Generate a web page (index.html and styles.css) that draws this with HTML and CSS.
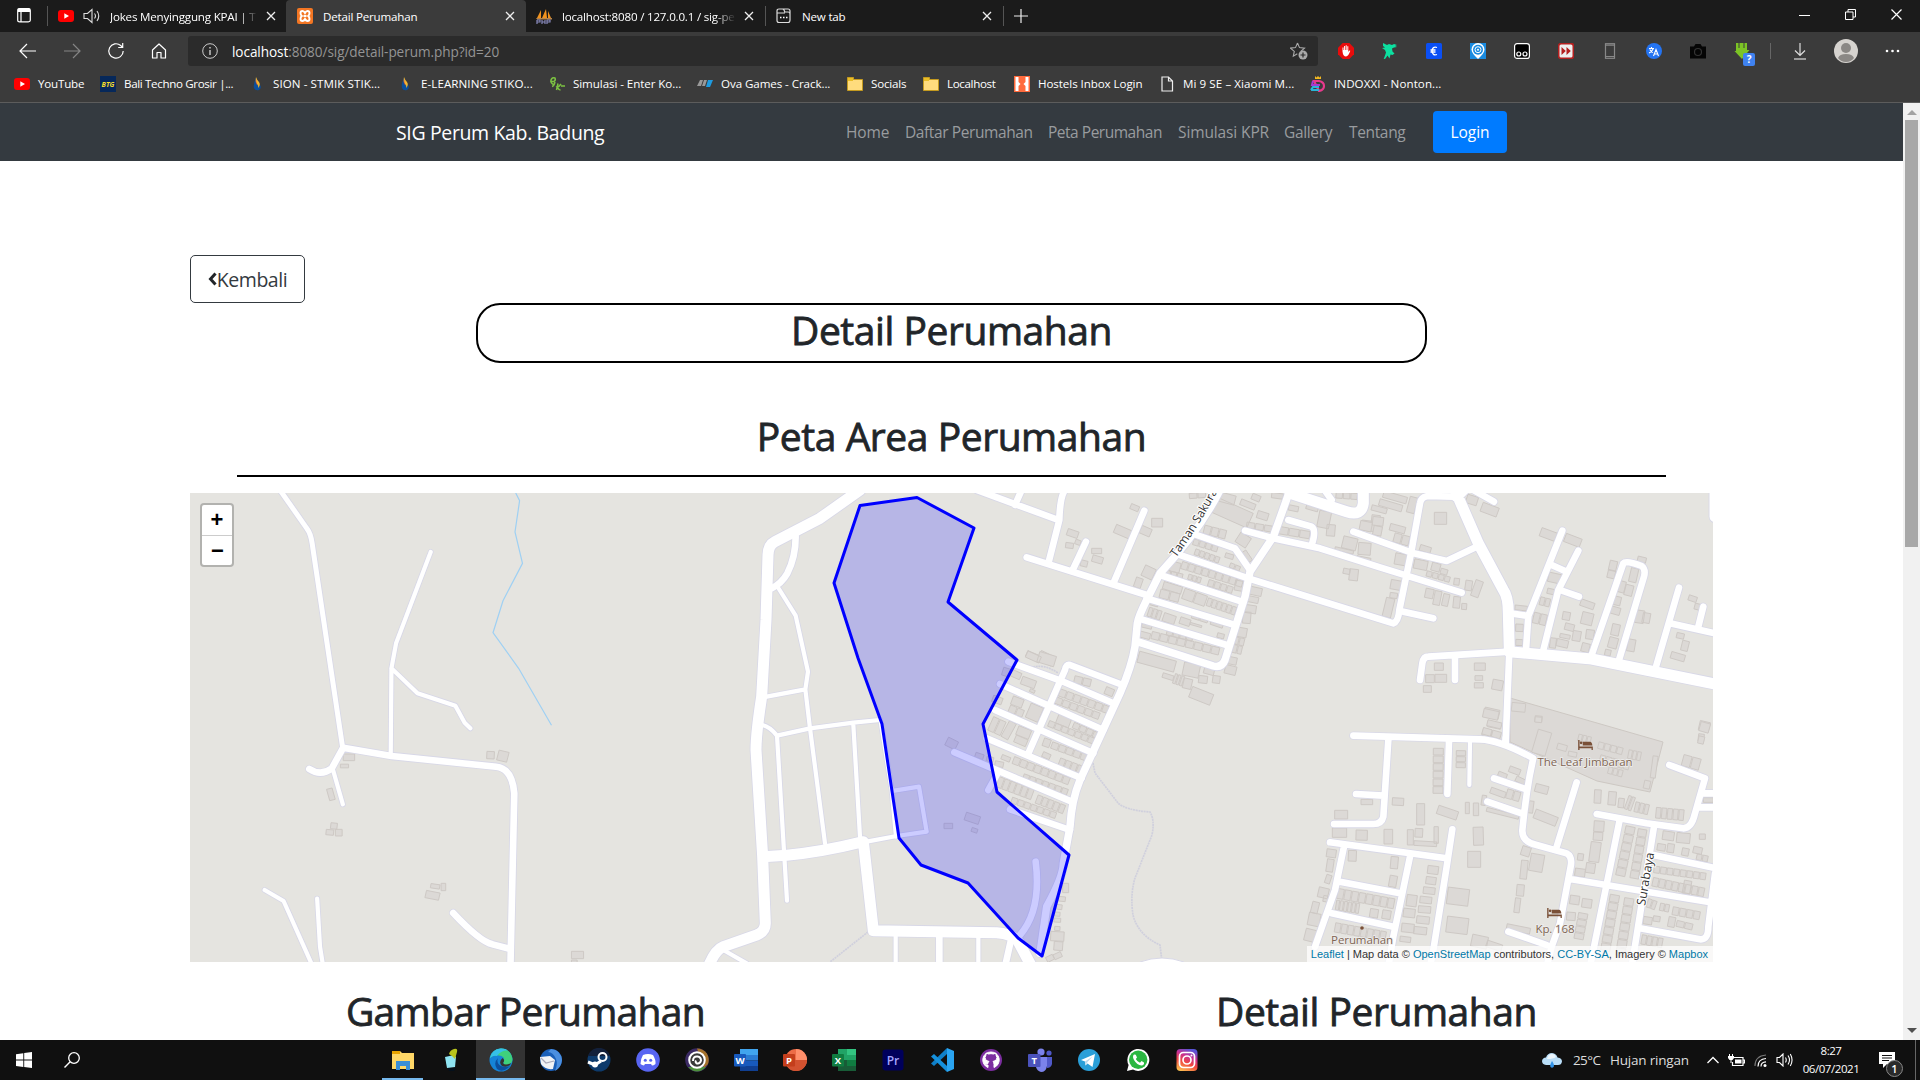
FILE: index.html
```html
<!DOCTYPE html>
<html lang="id">
<head>
<meta charset="utf-8">
<title>Detail Perumahan</title>
<link rel="stylesheet" href="styles.css">
</head>
<body>
<svg class="defs" aria-hidden="true">
  <symbol id="i-x" viewBox="0 0 10 10"><path d="M1 1l8 8M9 1l-8 8" stroke="currentColor" stroke-width="1.3" fill="none"/></symbol>
  <symbol id="i-yt" viewBox="0 0 16 16"><rect y="2" width="16" height="12" rx="3" fill="#f00"/><path d="M6.3 5.3v5.4L11 8z" fill="#fff"/></symbol>
  <symbol id="i-flame" viewBox="0 0 16 16"><path d="M7 2Q4 8 5 12q1 3 5 2 3-2 1-5Q9 6 7 2z" fill="#0b4f9c"/><path d="M7 1q-1 5 1 7 2 2 1 4 3-3 1-6Q8 4 7 1z" fill="#f2b632"/><path d="M7 3q0 4 1.500 6Q6 8 7 3z" fill="#e0402e"/></symbol>
  <symbol id="i-folder" viewBox="0 0 16 16"><path d="M.5 1.500h6v2h9v11H.5z" fill="#ffdc7d" stroke="#c49a1f"/><path d="M1 2h5v3H1z" fill="#e9bd28"/></symbol>
  <symbol id="i-bed" viewBox="0 0 16 12"><path d="M0 0h1.500v7H16v4h-1.400V9H1.500v2H0zM5 2h8q2 0 2.500 4H5z" fill="#7a5038"/><circle cx="3.200" cy="3" r="1.500" fill="#7a5038"/></symbol>
</svg>

<header class="browser">
  <div class="tabs">
    <div class="tabs-menu"><svg width="14" height="16" viewBox="0 0 14 16"><path d="M.7 2.500q0-2 2-2h8.600q2 0 2 2v9.800q0 1.500-2 1.500H2.700q-2 0-2-1.500zM.7 3.500h12.600M4 4v10" fill="none" stroke="#fff" stroke-width="1.200"/><path d="M1 1h12v2.500H1z" fill="#fff"/></svg></div>
    <div class="tab first">
      <svg width="16" height="16"><use href="#i-yt"/></svg>
      <svg class="spk" width="18" height="16" viewBox="0 0 18 16"><path d="M1 5.500h3.500L9 1.500v13l-4.500-4H1zM11.500 5.500q2 2.500 0 5M14 3q3.500 5 0 10" fill="none" stroke="#ddd" stroke-width="1.100"/></svg>
      <span class="title fade">Jokes Menyinggung KPAI | T</span>
      <svg class="x" width="10" height="10"><use href="#i-x"/></svg>
    </div>
    <div class="tab active">
      <svg width="16" height="16" viewBox="0 0 16 16"><rect width="16" height="16" rx="2" fill="#f37623"/><path d="M3.500 5q0-2 2-2Q7 3 8 5q1-2 2.500-2 2 0 2 2t-1.300 3q1.300 1 1.300 3t-2 2Q9 13 8 11q-1 2-2.500 2-2 0-2-2t1.300-3Q3.500 7 3.500 5zM6.500 8h3" fill="none" stroke="#fff" stroke-width="1.900"/></svg>
      <span class="title">Detail Perumahan</span>
      <svg class="x" width="10" height="10"><use href="#i-x"/></svg>
    </div>
    <div class="tab">
      <svg width="16" height="16" viewBox="0 0 16 16"><path d="M1 10L5 2v8zM6 10l4-9 1 9zM12 3l3 7h-3z" fill="#f0921e"/><path d="M0 10h16v1.500H1z" fill="#b8854a"/><path d="M1 12v4M1 12h3v2H1M6 12v4M6 14h3M9 12v4M11 12v4M11 12h3v2h-3" stroke="#8889bb" stroke-width="1.200" fill="none"/></svg>
      <span class="title fade">localhost:8080 / 127.0.0.1 / sig-pe</span>
      <svg class="x" width="10" height="10"><use href="#i-x"/></svg>
    </div>
    <div class="tab last">
      <svg width="15" height="16" viewBox="0 0 15 16"><path d="M1 3q0-2 2-2h3.500q1 0 1.500 1l.8 2H12q2 0 2 2v6q0 2.500-2 2.500H3Q1 14.500 1 12.500zM1 5h8M6 1h6q2 0 2 2v3" fill="none" stroke="#ddd" stroke-width="1.200"/><path d="M4 9.500h1.500M7 9.500h1.500M10 9.500h1.500" stroke="#fff" stroke-width="1.400"/></svg>
      <span class="title">New tab</span>
      <svg class="x" width="10" height="10"><use href="#i-x"/></svg>
    </div>
    <svg class="plus" width="14" height="14"><path d="M7 0v14M0 7h14" stroke="#eee" stroke-width="1.200"/></svg>
    <div class="winbtns">
      <svg width="11" height="11"><path d="M0 6.500h11" stroke="#fff"/></svg>
      <svg width="11" height="11"><path d="M.5 3h7.500v7.500H.5zM3 3V.5h7.500V8H8" fill="none" stroke="#fff"/></svg>
      <svg width="11" height="11"><path d="M.5.5l10 10M10.500.5l-10 10" stroke="#fff" stroke-width="1.200"/></svg>
    </div>
  </div>

  <div class="toolbar">
    <div class="navbtns">
      <svg width="18" height="16" viewBox="0 0 18 16"><path d="M8 1L1 8l7 7M1 8h16" fill="none" stroke="#fff" stroke-width="1.200"/></svg>
      <svg width="18" height="16" viewBox="0 0 18 16"><path d="M10 1l7 7-7 7M17 8H1" fill="none" stroke="#858585" stroke-width="1.200"/></svg>
      <svg width="18" height="18" viewBox="0 0 18 18"><path d="M16.200 9a7.200 7.200 0 1 1-2.500-5.500l2 2M15.700 1v4.500h-4.500" fill="none" stroke="#fff" stroke-width="1.200"/></svg>
      <svg width="16" height="16" viewBox="0 0 16 16"><path d="M1.500 7L8 1l6.500 6v8H10V9.500H6V15H1.500z" fill="none" stroke="#fff" stroke-width="1.200" stroke-linejoin="round"/></svg>
    </div>
    <div class="address">
      <svg width="16" height="16" viewBox="0 0 16 16"><circle cx="8" cy="8" r="7.300" fill="none" stroke="#ccc"/><path d="M8 7v5M8 4v1.500" stroke="#ddd" stroke-width="1.300"/></svg>
      <span class="url"><b>localhost</b>:8080/sig/detail-perum.php?id=20</span>
      <svg class="star" width="18" height="18" viewBox="0 0 18 18"><path d="M7.500 1l2 4.600 5 .5-3.700 3.200M7.500 1l-2 4.600-5 .5 3.800 3.300-1 4.800 4-2.400" fill="none" stroke="#aaa" stroke-width="1.100"/><circle cx="13" cy="13" r="4.500" fill="#aaa"/><path d="M13 10.500v5M10.500 13h5" stroke="#2b2b2b" stroke-width="1.200"/></svg>
    </div>
    <div class="exts">
      <svg viewBox="0 0 16 16"><path d="M4.700 0h6.600L16 4.700v6.600L11.300 16H4.700L0 11.300V4.700z" fill="#e80c0c"/><path d="M4.500 8.500V4.500h1V7h.6V3h1v4h.6V2.300h1V7h.6V3.300h1V9l1-1.500 1 .3Q10.500 13.500 8 13.500q-3 0-3.500-5z" fill="#fff"/></svg>
      <svg viewBox="0 0 16 16"><path d="M1 0l4 2 2-1 3 1 2-1 3 1-2 1 2 1-3 .5-2 1 .5 3 2 2-2 1.500-2-.5-1 4-2-3-2 3-2 1 1.500-4 1-3-1-2.500-3-2 3-.5-2-1.500z" fill="#0ce0a0"/></svg>
      <svg viewBox="0 0 16 16"><rect width="16" height="16" rx="1.500" fill="#0a4ff5"/><path d="M11 4.500q-4.500-1.500-5 3.500.5 5 5 3.500M4.500 7h5M4.500 9h5" fill="none" stroke="#fff" stroke-width="1.300"/></svg>
      <svg viewBox="0 0 16 16"><rect width="16" height="16" fill="#1a8be0"/><path d="M8 16Q1.500 10 1.500 6.500a6.500 6.500 0 0 1 13 0Q14.500 10 8 16z" fill="#fff"/><circle cx="8" cy="6.700" r="5" fill="#1a8be0"/><circle cx="8" cy="6.700" r="3" fill="none" stroke="#fff"/><circle cx="8" cy="6.700" r="1" fill="#fff"/></svg>
      <svg viewBox="0 0 16 16"><rect x=".6" y=".6" width="14.800" height="14.800" rx="2.500" fill="#000" stroke="#fff" stroke-width="1.200"/><g fill="none" stroke="#fff" stroke-width="1.200"><circle cx="4.800" cy="11" r="2"/><circle cx="11" cy="11" r="2"/></g></svg>
      <svg viewBox="0 0 16 16"><rect x=".6" y=".6" width="14.800" height="14.800" rx="2.500" fill="#eee" stroke="#b41f1f" stroke-width="1.800"/><path d="M3.500 4l4.300 4-4.300 4zM8.500 4l4.300 4-4.300 4z" fill="#b41f1f"/></svg>
      <svg viewBox="0 0 16 16"><rect x="3.500" y=".7" width="9" height="14.600" fill="none" stroke="#888" stroke-width="1.200"/><path d="M3.500 2.200h9M3.500 13.500h9" stroke="#888" stroke-width="1.200"/></svg>
      <svg viewBox="0 0 16 16"><circle cx="8" cy="8" r="8" fill="#2474f2"/><path d="M3 5.500h5M5.500 4v1.500M7.300 5.500Q6 9 3 10M3.800 6.500Q5 9 7 9.500M7.500 13L10 6.500 12.500 13M8.500 11h3" fill="none" stroke="#fff" stroke-width="1.100"/></svg>
      <svg viewBox="0 0 16 16"><path d="M0 3.500h4L5.500 1h5L12 3.500h4v12H0z" fill="#050505"/><circle cx="8" cy="9" r="3.500" fill="none" stroke="#333" stroke-width="1.200"/></svg>
      <span class="idm"><svg viewBox="0 0 16 16"><path d="M2 0h11v7h2.500L8 16 .5 8H2z" fill="#7cc425"/><path d="M5 0v5M10 0v5" stroke="#3b3b3b"/></svg><i>?</i></span>
    </div>
    <div class="tools">
      <svg width="14" height="17" viewBox="0 0 14 17"><path d="M7 0v12M2 7.500L7 12.500l5-5" fill="none" stroke="#ddd" stroke-width="1.200"/><path d="M1 16h12" stroke="#ddd" stroke-width="1.200"/></svg>
      <svg class="avatar" width="24" height="24" viewBox="0 0 24 24"><circle cx="12" cy="12" r="12" fill="#d6d3cf"/><circle cx="12" cy="9" r="5" fill="#8b8885"/><path d="M4 19q1.500-4 8-4t8 4q-3 4-8 4t-8-4z" fill="#8b8885"/></svg>
      <svg class="dots" width="15" height="4"><circle cx="2" cy="2" r="1.300" fill="#fff"/><circle cx="7.500" cy="2" r="1.300" fill="#fff"/><circle cx="13" cy="2" r="1.300" fill="#fff"/></svg>
    </div>
  </div>

  <div class="bookmarks">
    <span><svg><use href="#i-yt"/></svg>YouTube</span>
    <span class="tight"><svg viewBox="0 0 16 16"><rect width="16" height="16" fill="#06285a"/><text class="btg" x="8" y="11">BTG</text></svg>Bali Techno Grosir |...</span>
    <span class="wide"><svg><use href="#i-flame"/></svg>SION - STMIK STIK...</span>
    <span class="wide"><svg><use href="#i-flame"/></svg>E-LEARNING STIKO...</span>
    <span class="mid"><svg viewBox="0 0 16 16"><path d="M5.500 9Q1 7 2 4t4-2q1 2-1 3.500H2.500M6 6q-1 4-3 4.500M9 7.500L7.500 14M12 8q-2 3-4 3 2 3 3.500 3M12 10h4" fill="none" stroke="#7cc242" stroke-width="1.500"/></svg>Simulasi - Enter Ko...</span>
    <span class="mid"><svg viewBox="0 0 16 16"><path d="M3 4h3L4 10H0zM7 4h3l-2 6H5z" fill="#999"/><path d="M11 4h5l-3 7H9z" fill="#1e9be0"/></svg>Ova Games - Crack...</span>
    <span><svg><use href="#i-folder"/></svg>Socials</span>
    <span class="tight"><svg><use href="#i-folder"/></svg>Localhost</span>
    <span class="mid"><svg viewBox="0 0 16 16"><rect width="16" height="16" fill="#ff6b3d"/><path d="M1.500 1h3v5l2 2-2 2v5h-3zM14.500 1h-3v5l-2 2 2 2v5h3z" fill="#fff"/></svg>Hostels Inbox Login</span>
    <span class="wide"><svg viewBox="0 0 16 16"><path d="M3 1h6.500l4 4v10H3zM9.500 1v4h4" fill="none" stroke="#eee" stroke-width="1.200"/></svg>Mi 9 SE – Xiaomi M...</span>
    <span class="wider"><svg viewBox="0 0 16 16"><path d="M5 0l1.500 1.500L8 0l1.500 1.500L11 0v3H5z" fill="#f3b820"/><path d="M4 5h5q5 1 5 5t-5 5z" fill="none" stroke="#e83a8c" stroke-width="2.200"/><path d="M3 5l-1 4h8" fill="none" stroke="#a33bd0" stroke-width="2"/><path d="M1 14l2-3h6M1 14h8" fill="none" stroke="#28b5d8" stroke-width="2.200"/></svg>INDOXXI - Nonton...</span>
  </div>
</header>

<div class="viewport">
  <div class="page">
    <nav class="navbar">
      <span class="brand">SIG Perum Kab. Badung</span>
      <ul class="links"><li>Home</li><li>Daftar Perumahan</li><li>Peta Perumahan</li><li>Simulasi KPR</li><li>Gallery</li><li>Tentang</li></ul>
      <span class="login">Login</span>
    </nav>
    <main>
      <a class="back"><svg width="9" height="14" viewBox="0 0 9 14"><path d="M7.500 1.500L2.500 7l5 5.500" fill="none" stroke="#212529" stroke-width="3"/></svg>Kembali</a>
      <h1 class="boxed">Detail Perumahan</h1>
      <h1 class="area">Peta Area Perumahan</h1>
      <hr>
      <div class="map">
        <svg class="canvas" viewBox="190 493 1523 469" width="1523" height="469">
          <defs><g id="roads">
            <g transform="translate(180 480) scale(.35714 .33333)">
              <path class="w5" d="M270 15L355 145Q366 160 370 190L455 800"/>
              <path class="w4" d="M702 216L605 490 592 565 590 830M592 565L665 640 771 677 797 728 813 745M428 868L456 973M237 1230L290 1263 372 1460M384 1256L392 1400 401 1460"/>
              <path class="w7" d="M362 867Q395 890 425 865L457 803 592 828 885 860Q930 865 936 940L925 1470M765 1299Q840 1385 875 1393L925 1407"/>
            </g>
            <g transform="translate(700 480) scale(.33333)">
              <path class="w11" d="M480 30L360 115 225 185Q205 195 204 225L198 420 185 650Q168 760 168 810L188 1130 196 1330Q196 1355 170 1365L70 1400Q45 1410 25 1460M190 1130L260 1126Q370 1115 490 1085L520 1352 890 1358Q940 1362 955 1385L995 1460"/>
              <path class="w7" d="M287 170Q287 230 262 280 245 310 215 325M1007 1145Q1025 1290 960 1365M718 1370V1460M933 1380L915 1460M830 30L1075 120M1095 30Q1080 50 1078 120L1045 250M965 30L945 75M980 232L1340 345M1158 185L1118 270"/>
              <path class="w4" d="M237 327L287 407 324 575 316 628 330 745 375 1090M200 650L316 628M187 735Q210 740 231 767L330 745 460 728 540 720M231 767L261 1262M460 735L480 1070M543 730L575 930 588 1070M500 1085L590 1068 680 1055 657 920 583 932M587 1370V1460M835 1370V1460M70 1410L140 1450"/>
              <path class="w7" d="M925 545L1090 605 1240 670M900 612L1210 750M885 690L1180 820M860 775L1145 895M763 817L1115 965M930 988L1110 1050M865 930L890 885M985 820L1095 570Q1098 552 1110 555L1260 612"/>
            </g>
            <g transform="translate(1000 480) scale(.33333)">
              <path class="w8" d="M660 30Q600 150 480 280L440 360Q415 410 412 430L405 500Q395 560 360 640L300 770 240 900Q215 960 210 1040L190 1150Q190 1190 140 1280L120 1420M870 30L820 170 750 275 735 350 700 460 675 540Q665 565 640 558L412 485"/>
              <path class="w7" d="M433 92L340 310M590 165L705 205 750 270M530 222L745 295 1180 430Q1195 425 1198 390L1235 210 1260 70Q1263 50 1285 48L1360 50M480 285L725 365M440 355L705 435M425 418L680 495M735 152L820 175 960 205 1140 262 1385 338M865 120L935 140Q950 150 935 195M970 25L995 60M1060 155L1235 218 1340 243 1430 200"/>
              <path class="w11" d="M870 40L1040 95Q1085 110 1090 70V30"/>
            </g>
            <g transform="translate(1340 480) scale(.33333)">
              <path class="w11" d="M345 30L415 190 490 330Q505 350 505 400L508 515 755 537 1130 613M350 50L375 25"/>
              <path class="w7" d="M508 515L265 530Q250 530 247 550L240 600M345 535V600M508 515L497 785M400 30L462 65M510 400L565 408M667 152L565 408 558 510M715 212L655 330 610 510M635 255L680 275M660 330L717 350M755 525L850 250Q858 240 905 258 918 268 912 290L837 540M1017 323L948 560M990 430L1125 460M1090 380L1075 440M190 395L280 415"/>
              <path class="w11" d="M1125 20V110"/>
            </g>
            <g transform="translate(1280 710) scale(.33333)">
              <path class="w7" d="M220 77L600 88Q660 90 760 145 740 230 727 360 725 395 770 405L860 430Q878 440 872 470L840 640 815 710 800 770M325 90L310 320Q305 342 280 342H162M228 252L310 257M507 95L502 252M642 205L735 237M622 275L725 310M890 217L830 410M150 397L500 445M517 358L500 470 460 720 450 770M193 405L165 540 105 710M180 515L360 550M390 440L340 680 325 770M155 610L340 650M870 507L1310 580M1020 325L930 770M950 312L1100 340 1210 355Q1235 355 1245 310L1275 205 1168 165M1265 250H1320M1255 292H1320M1122 350L1055 770M1120 435L1310 475M1080 655L1260 688Q1285 690 1285 650L1305 490M685 665L800 705M677 85V100"/>
              <path class="w4" d="M570 95L568 225"/>
            </g>
          </g></defs>
          <rect x="190" y="493" width="1523" height="469" fill="#e5e4e0"/>
          <path class="hotel" d="M1510 698L1663 742 1650 792 1597 781 1510 742z"/>
          <g id="buildings"></g>
          <path class="water" d="M515.700 493L519.600 500.700 515 532 522.500 563.300 503 600.700 493 632.700 518.600 668.300 551.500 725.300"/>
          <path class="trail" d="M1093 763L1095 773 1118 803Q1125 810 1150 812 1155 820 1152 835L1135 878Q1130 895 1133 915 1138 935 1160 945L1162 962M868 932L830 962M1033 667Q1045 664 1058 673"/>
          <use href="#roads" class="casing"/>
          <use href="#roads" class="fill"/>
          <path class="pond" d="M1140 962Q1162 954 1184 962"/>
          <path class="estate" d="M860 505.500L917 497.500 974 528 948 602 1017 660 983 724 997 792 1069 855 1042 956 1018 938 968 883 921 865 899 838 882 724 858 658 834 583z"/>
          <path id="sakura" d="M1176 558Q1205 518 1232 464" fill="none"/>
          <text class="road sakura"><textPath href="#sakura">Taman Sakura</textPath></text>
          <text class="road" transform="translate(1645 906) rotate(-80)">Surabaya</text>
          <text class="poi" x="1585" y="766">The Leaf Jimbaran</text>
          <text class="poi" x="1555" y="933">Kp. 168</text>
          <text class="poi" x="1362" y="944">Perumahan</text>
          <circle cx="1362" cy="928" r="1.800" fill="#7a5038"/>
          <use href="#i-bed" x="1578" y="740" width="15" height="11"/>
          <use href="#i-bed" x="1547" y="908" width="15" height="11"/>
        </svg>
        <div class="zoomctl"><span>+</span><span>−</span></div>
        <div class="attr"><a>Leaflet</a> | Map data © <a>OpenStreetMap</a> contributors, <a>CC-BY-SA</a>, Imagery © <a>Mapbox</a></div>
      </div>
      <div class="cols"><h1>Gambar Perumahan</h1><h1>Detail Perumahan</h1></div>
    </main>
  </div>
  <div class="scrollbar"><i class="up"></i><i class="thumb"></i><i class="down"></i></div>
</div>

<footer class="taskbar">
  <div class="start">
    <svg width="16" height="16" viewBox="0 0 16 16"><path d="M0 2.200L7.300 1.200V7.600H0zM8.200 1L16 0V7.600H8.200zM0 8.500h7.300v6.400L0 13.900zM8.200 8.500H16V16l-7.800-1z" fill="#fff"/></svg>
    <svg width="16" height="16" viewBox="0 0 16 16"><circle cx="10" cy="6" r="5.300" fill="none" stroke="#fff" stroke-width="1.300"/><path d="M6.200 9.800L.5 15.500" stroke="#fff" stroke-width="1.400"/></svg>
  </div>
  <div class="apps">
    <span class="open"><svg viewBox="0 0 24 24"><path d="M1 3h8l2 2h12v16H1z" fill="#ffd767"/><path d="M1 3h8v3H1z" fill="#e8a300"/><path d="M5 22v-9h14v9h-4v-4H9v4z" fill="#3b8fd6"/></svg></span>
    <span><svg viewBox="0 0 24 24"><path d="M5 9l9-2 2 2-1 10-8 1z" fill="#8fe4f2"/><path d="M9 6q1-4 5-5 4-1 3 3l-2 7-3-3z" fill="#b8c41c"/><path d="M8 20h8l-2 3h-5z" fill="#04101c"/></svg></span>
    <span class="current"><svg viewBox="0 0 24 24"><circle cx="12" cy="12" r="11.500" fill="#1584d8"/><path d="M1 10Q3 1 12 .5 22 1 23.500 11q0 5-5 6-5 0-4-3 2-4-2-6Q5 6 1 10z" fill="#3fd07c"/><path d="M1 10Q3 1 12 .5q5 0 7 2Q12 2 8 8 4 7 1 10z" fill="#35c1e8"/><path d="M9 10q-5 5-1 11 5 4 11-1l2-2q-5 2-9 0-5-3-3-8z" fill="#0c4f9e"/><path d="M13.500 10q3 2 .5 5 2 3 8 0l-1 2q-4 3-8 1-4-4 .5-8z" fill="#333"/></svg></span>
    <span><svg viewBox="0 0 24 24"><circle cx="13" cy="12" r="11" fill="#1a5fb8"/><path d="M13 1q10 1 11 11-1 8-7 11 3-7 1-12-3-7-8-7z" fill="#4b8fe0"/><path d="M2 9l10-1 5 4-2 9q-8 1-12-5z" fill="#f1f3f6"/><path d="M3 10l5 5 8-2" fill="none" stroke="#aab" stroke-width="1.200"/></svg></span>
    <span><svg viewBox="0 0 24 24"><circle cx="12" cy="12" r="11.500" fill="#0d3a6b"/><path d="M1 8A11.500 11.500 0 0 1 23 8z" fill="#13203a"/><circle cx="15.500" cy="9" r="4" fill="none" stroke="#fff" stroke-width="2"/><path d="M1 14l7 3 6-4" fill="none" stroke="#fff" stroke-width="3"/><circle cx="8" cy="16.500" r="3" fill="#fff"/></svg></span>
    <span><svg viewBox="0 0 24 24"><circle cx="12" cy="12" r="11.800" fill="#5865f2"/><path d="M7 7q5-2 10 0 3 5 2.500 9-2 1.500-3.500 1.500L15 16H9l-1 1.500Q6 17 4.500 16 4.500 11 7 7z" fill="#fff"/><circle cx="9.300" cy="12.300" r="1.500" fill="#5865f2"/><circle cx="14.700" cy="12.300" r="1.500" fill="#5865f2"/></svg></span>
    <span><svg viewBox="0 0 24 24"><circle cx="12" cy="12" r="11.800" fill="#3b2a63"/><path d="M12 .5A11.500 11.500 0 0 1 23 16l-4 4z" fill="#a4722c"/><path d="M3 19q9 9 18 0z" fill="#4d8f3c"/><circle cx="12" cy="12" r="7.800" fill="#3a3a3a" stroke="#fff" stroke-width="2"/><path d="M8 13q0-5 4.500-4.500 3.500.5 3.500 4-1 3.500-4 3-2-1-1-3" fill="none" stroke="#fff" stroke-width="2"/></svg></span>
    <span><svg viewBox="0 0 24 24"><path d="M6 1h18v6H6z" fill="#41a5ee"/><path d="M6 7h18v5.500H6z" fill="#2b7cd3"/><path d="M6 12.500h18V18H6z" fill="#185abd"/><path d="M6 18h18v5H6z" fill="#103f91"/><rect y="6" width="12" height="12.500" rx="1" fill="#185abd"/><text x="6" y="16">W</text></svg></span>
    <span><svg viewBox="0 0 24 24"><circle cx="13" cy="12" r="11" fill="#ed6c47"/><path d="M13 1a11 11 0 0 1 11 11H13z" fill="#ff8f6b"/><path d="M2 12h22a11 11 0 0 1-22 0z" fill="#d35230"/><rect y="6" width="12" height="12.500" rx="1" fill="#c43e1c"/><text x="6" y="16">P</text></svg></span>
    <span><svg viewBox="0 0 24 24"><path d="M6 1h18v22H6z" fill="#21a366"/><path d="M15 1h9v6h-9z" fill="#33c481"/><path d="M6 12h9v11H6z" fill="#185c37"/><path d="M15 12h9v6h-9z" fill="#107c41"/><path d="M15 18h9v5h-9z" fill="#185c37"/><rect y="6" width="12" height="12.500" rx="1" fill="#107c41"/><text x="6" y="16">X</text></svg></span>
    <span><svg viewBox="0 0 24 24"><rect x="1.500" y="1.500" width="21" height="21" rx="3" fill="#00005b"/><text class="pr" x="12" y="16.500">Pr</text></svg></span>
    <span><svg viewBox="0 0 24 24"><path d="M17 0l7 3v18l-7 3z" fill="#2aa5f2"/><path d="M17 6L4 18l-3-2.500L17 0z" fill="#0f7fc8"/><path d="M17 18L4 6 1 8.500 17 24z" fill="#1590dc"/></svg></span>
    <span><svg viewBox="0 0 24 24"><circle cx="12" cy="12" r="11" fill="#7c2ea0"/><path d="M12 4a8 8 0 0 0-3 15.500V17q-3 .5-3.500-2 2 1.500 3.500.5 0-1.500 1-2-4-.5-4-4l1-2.500V5l2.500 1q2.500-.7 5 0L17 5v2l1 2.500q0 3.500-4 4 1 1 1 3v3A8 8 0 0 0 12 4z" fill="#fff" stroke="#fff"/></svg></span>
    <span><svg viewBox="0 0 24 24"><circle cx="13" cy="4" r="3.600" fill="#7b83eb"/><circle cx="21" cy="5" r="2.600" fill="#5059c9"/><path d="M18 9h6v7q-1 4-5 4z" fill="#5059c9"/><path d="M8 9h11v9q-1 6-6 6-4-1-5-5z" fill="#7b83eb"/><rect y="6" width="12.500" height="13" rx="1" fill="#4b53bc"/><text x="6.200" y="16">T</text></svg></span>
    <span><svg viewBox="0 0 24 24"><circle cx="12" cy="12" r="11" fill="#2a9fd8"/><path d="M4 12l14-6-2.500 13-5-3.500-2 2-.5-4z" fill="#fff"/><path d="M8 13.500L15.500 8.500 10.500 14l-2 3.500z" fill="#bcd9ec"/></svg></span>
    <span><svg viewBox="0 0 24 24"><path d="M1 23l1.600-6A11 11 0 1 1 7 21.500z" fill="#fff"/><circle cx="12.200" cy="11.800" r="9.200" fill="#2bb741"/><path d="M8 6.500q-2 2 0 5.500 3 5 7.500 5.500 3-.5 2.500-3L15.500 13l-1.500 1.800Q11 13.500 9.800 11l1.200-1.500L9.800 6.700z" fill="#fff"/></svg></span>
    <span><svg viewBox="0 0 24 24"><defs><linearGradient id="ig" x1=".2" y1="1" x2=".6" y2="0"><stop offset="0" stop-color="#fdc250"/><stop offset=".4" stop-color="#f0483e"/><stop offset=".7" stop-color="#c92f92"/><stop offset="1" stop-color="#5a55d6"/></linearGradient></defs><rect x="1.500" y="1" width="21" height="22" rx="4" fill="url(#ig)"/><g fill="none" stroke="#fff" stroke-width="1.700"><rect x="4.500" y="4.500" width="15" height="15" rx="4"/><circle cx="12" cy="12" r="4"/></g><circle cx="16.500" cy="7.500" r="1" fill="#fff"/></svg></span>
  </div>
  <div class="tray">
    <svg class="cloud" width="20" height="17" viewBox="0 0 20 17"><path d="M4 13q-4-.5-4-4 .5-3.500 4-3.500Q5.500 1 10 1q4.500.5 5.500 4.500Q20 6 20 9.500 19.500 13 16 13z" fill="#b9def8"/><path d="M5 7q1-5 5-5 3 0 4 3-3 2-9 2z" fill="#ecf6fd"/><path d="M10 9q3 4 1.500 6-1.500 1.500-3 0Q7.500 13 10 9z" fill="#3293e8"/></svg>
    <span class="temp">25°C</span><span class="wx">Hujan ringan</span>
    <svg width="12" height="8"><path d="M.5 7L6 1.500 11.500 7" fill="none" stroke="#fff" stroke-width="1.300"/></svg>
    <svg width="17" height="13" viewBox="0 0 17 13"><path d="M5.500 3.500H15v8H4.500V8M15 6h1.500v3H15" fill="none" stroke="#fff" stroke-width="1.200"/><path d="M7 5.500h6.500v4H7zM0 2h6v2L4.500 6h-3L0 4zM1 0h1v2H1zM4 0h1v2H4zM2.500 6h1v3h-1z" fill="#fff"/></svg>
    <svg width="13" height="13" viewBox="0 0 13 13"><path d="M1 12Q1 2 12 1" fill="none" stroke="#777" stroke-width="1.200"/><path d="M4 12.500Q4 5 12 4.500M7 12.500Q7 8 12 7.800" fill="none" stroke="#fff" stroke-width="1.200"/><circle cx="11" cy="11.500" r="1.500" fill="#fff"/></svg>
    <svg width="17" height="14" viewBox="0 0 17 14"><path d="M1 4.500h2.500L7 1v12L3.500 9.500H1zM9.500 4.500q1.500 2.500 0 5M12 2.500q3 4.500 0 9M14.300 1q3.500 6 0 12" fill="none" stroke="#fff" stroke-width="1.100"/></svg>
    <div class="clock"><span>8:27</span><span>06/07/2021</span></div>
    <div class="note"><svg width="16" height="16" viewBox="0 0 16 16"><path d="M0 0h16v12H8l-4 4v-4H0z" fill="#fff"/><path d="M3 3.500h10M3 6h10M3 8.500h7" stroke="#101010"/></svg><i>1</i></div>
    <div class="peek"></div>
  </div>
</footer>
<script src="script.js"></script>
</body>
</html>
```
FILE: styles.css
```css
*{box-sizing:border-box}
body{margin:0;width:1920px;height:1080px;overflow:hidden;display:flex;flex-direction:column;font-family:"Open Sans","Noto Sans",sans-serif;background:#fff;color:#212529}
.defs{position:absolute;width:0;height:0}
svg{display:block;flex:none}

/* browser chrome */
.browser{height:103px;flex:none;background:#3b3b3b;border-bottom:1px solid #5c5c5c;color:#fff;font-size:11.6px;letter-spacing:-.2px}
.tabs{display:flex;align-items:center;height:32px;background:#1b1b1b}
.tabs-menu{width:48px;height:20px;padding:2px 0 0 17px;border-right:1px solid #555}
.tab{display:flex;align-items:center;width:239px;height:32px;padding:0 11px 0 10px}
.tab.first{width:238px;padding-right:10px}
.spk{margin-left:9px}
.title{margin-left:10px;flex:1;white-space:nowrap;overflow:hidden}
.spk+.title{margin-left:9px}
.fade{-webkit-mask-image:linear-gradient(90deg,#000 88%,transparent 100%);mask-image:linear-gradient(90deg,#000 88%,transparent 100%)}
.x{margin-left:8px;color:#eee}
.tab.active{width:240px;padding-left:11px;background:#3b3b3b;border-radius:4px 4px 0 0}
.tab.last{height:20px;border-left:1px solid #555;border-right:1px solid #555}
.tab.last .title{margin-left:11px}
.plus{margin-left:10px}
.winbtns{display:flex;gap:35px;margin:-4px 18px 0 auto}
.toolbar{display:flex;align-items:center;height:38px}
.navbtns{display:flex;align-items:center;gap:26px;width:188px;padding-left:19px}
.address{display:flex;align-items:center;width:1130px;height:30px;background:#2b2b2b;border-radius:3px;padding:0 10px 0 14px;font-size:13.6px;letter-spacing:-.08px;color:#949494}
.url{margin-left:14px;flex:1}
.url b{font-weight:400;color:#fff}
.exts{display:flex;gap:28px;width:432px;margin-left:20px;padding-right:20px}
.exts svg{width:16px;height:16px}
.idm{position:relative}
.idm i{position:absolute;left:9px;top:10px;width:12px;height:13px;background:#3f82f0;border-radius:2px;font:bold 10px/13px "Open Sans",sans-serif;text-align:center}
.tools{display:flex;align-items:center;height:16px;padding-left:22px;border-left:1px solid #666}
.avatar{margin-left:27px}
.dots{margin-left:27px}
.bookmarks{display:grid;grid-template-columns:86px 149px 148px 152px 148px 150px 76px 91px 145px 151px auto;align-items:center;height:27px;padding-left:14px}
.bookmarks span{display:flex;align-items:center;gap:8px;white-space:nowrap}
.bookmarks .tight{letter-spacing:-.35px}
.bookmarks .mid{letter-spacing:-.08px}
.bookmarks .wide{letter-spacing:.07px}
.bookmarks .wider{letter-spacing:.08px}
.bookmarks svg{width:16px;height:16px}
.btg{font:italic 700 7px "Open Sans",sans-serif;fill:#f5dc2c;text-anchor:middle;letter-spacing:0}

/* page */
.viewport{display:flex;height:937px;flex:none}
.page{width:1903px;overflow:hidden}
.navbar{display:flex;align-items:center;height:58px;padding-left:396px;background:#343a40;color:#fff}
.brand{width:450px;font-size:19.5px;letter-spacing:-.36px}
.links{display:grid;grid-template-columns:59px 143px 130px 106px 65px 84px;margin:0;padding:0;list-style:none;font-size:15.5px;letter-spacing:-.35px;color:#999c9f;white-space:nowrap}
.links li:nth-child(1),.links li:nth-child(4){letter-spacing:-.12px}
.links li:nth-child(2){letter-spacing:-.4px}
.links li:nth-child(3){letter-spacing:-.48px}
.login{width:74px;height:42px;border-radius:4px;background:#007bff;font-size:15.5px;line-height:43px;text-align:center}
main{padding:94px 190px 0}
.back{display:flex;align-items:center;justify-content:center;width:115px;height:48px;border:1px solid #343a40;border-radius:5px;font-size:19.5px;letter-spacing:-.45px;color:#343a40}
h1{margin:0;font-size:39px;font-weight:400;line-height:48px;letter-spacing:-.45px;text-align:center;white-space:nowrap;-webkit-text-stroke:.8px #212529}
.boxed{width:951px;height:60px;margin:0 auto 0 286px;border:2px solid #000;border-radius:24px;line-height:49px}
.area{margin-top:49px}
hr{width:1429px;margin:15px 0 16px 47px;border:0;border-top:2px solid #000}
.map{position:relative;height:469px;overflow:hidden}
.canvas path,.canvas rect{vector-effect:non-scaling-stroke}
#roads path{--w:7px;fill:none;stroke-linecap:round;stroke-linejoin:round;stroke-width:calc(var(--w) + var(--rim))}
#roads .w4{--w:4.200px}
#roads .w5{--w:5px}
#roads .w7{--w:6.600px}
#roads .w8{--w:7.500px}
#roads .w11{--w:11px}
.casing{--rim:1.700px;stroke:#d8d8e7}
.fill{--rim:0px;stroke:#fff}
#buildings{fill:#dcd9d6;stroke:#cec9c5;stroke-width:1px}
.hotel{fill:#dcd9d6;stroke:#cdc8c3}
.pond{fill:#fff;stroke:#d8d8e7}
.water{fill:none;stroke:#9fd0f3;stroke-width:1.200px}
.trail{fill:none;stroke:#d0d0dd;stroke-width:1.700px;stroke-dasharray:2 .7}
.estate{fill:rgba(0,0,255,.2);stroke:#00f;stroke-width:3px;stroke-linejoin:round}
.road{font:12.300px "Open Sans",sans-serif;fill:#333;stroke:#fff;stroke-width:2px;paint-order:stroke}
.sakura{font-size:12px;letter-spacing:-.1px}
.poi{font:11.500px "Open Sans",sans-serif;letter-spacing:-.1px;fill:#806552;stroke:#eee;stroke-width:1.500px;paint-order:stroke;text-anchor:middle}
.zoomctl{position:absolute;left:10px;top:10px;width:34px;border:2px solid rgba(0,0,0,.22);border-radius:4px;background:#fff;background-clip:padding-box;font:bold 22px/30px "Liberation Sans",sans-serif;color:#000;text-align:center}
.zoomctl span{display:block;height:30px}
.zoomctl span+span{padding-left:1px;line-height:29px;border-top:1px solid #ccc}
.attr{position:absolute;right:0;bottom:0;padding:0 5px 0 4px;background:rgba(255,255,255,.75);font:11px/16px "Liberation Sans",sans-serif;color:#333;white-space:nowrap}
.attr a{color:#0078a8}
.cols{display:grid;grid-template-columns:671px 1fr;padding-top:25px}
.cols h1:first-child{letter-spacing:-.7px}
.cols h1+h1{width:1031px}
.scrollbar{display:flex;flex-direction:column;align-items:center;width:17px;padding:7px 0;background:#f1f1f1}
.up,.down{border:5px solid transparent;border-width:0 5px 5px;border-bottom-color:#a3a3a3}
.thumb{width:13px;height:427px;margin:5px 0 auto;background:#a8a8a8}
.down{border-width:5px 5px 0;border-top-color:#505050}

/* taskbar */
.taskbar{display:flex;align-items:center;height:40px;flex:none;background:#101010;color:#fff}
.start{display:flex;gap:32px;width:378px;padding-left:16px}
.apps{display:flex;height:40px}
.apps span{display:flex;align-items:center;justify-content:center;width:49px;position:relative}
.apps svg{width:24px;height:24px}
.apps .current{background:#333;border-bottom:2px solid #76b9ed;padding-top:2px}
.apps .open::after{content:"";position:absolute;left:4px;right:4px;bottom:0;height:2px;background:#76b9ed}
.apps text{font:700 9.500px "Open Sans",sans-serif;fill:#fff;text-anchor:middle}
.apps .pr{font-size:12px;font-weight:600;fill:#a5a5ff}
.tray{display:flex;align-items:center;margin-left:auto;width:378px;height:40px;font-size:13.500px;color:#ddd}
.tray svg+svg{margin-left:9px}
.temp{width:37px;margin-left:11px;letter-spacing:-.6px}
.wx{width:97px;letter-spacing:-.2px;white-space:nowrap}
.clock{display:flex;flex-direction:column;width:60px;margin-left:8px;font-size:11.500px;line-height:18px;letter-spacing:-.45px;text-align:center;color:#fff}
.note{position:relative;margin-left:18px}
.note i{position:absolute;left:7px;top:8px;width:17px;height:17px;border:1px solid #888;border-radius:50%;background:#2a2a2a;font:600 11px/15px "Open Sans",sans-serif;text-align:center;color:#fff}
.peek{width:5px;height:40px;margin-left:auto;border-left:1px solid #666}
```
FILE: script.js
```js
// Building footprints, in thirds of a pixel from each block's origin.
// rows: [x1, y1, x2, y2, houses, depth]; a single house is a row of one.
const blocks = [
  { at: [180, 480], k: [.35714, .33333], rows: [
    [457,832,489,832,1,20],[449,858,472,858,1,11],[418,926,427,960,1,16],[422,1037,440,1039,1,18],[409,1056,430,1058,1,16],[435,1058,454,1058,1,20],
    [859,825,880,826,1,22],[890,825,918,832,1,30],[702,1217,727,1221,1,13],[731,1221,744,1221,1,22],[688,1242,726,1250,1,22],[1096,1425,1130,1425,1,22],[1096,1444,1112,1444,1,8]] },
  { at: [700, 480], k: [.33333, .33333], rows: [
    [740,783,770,798,1,26],[732,1038,758,1038,1,16],[796,1008,838,1022,1,24],[815,1048,832,1054,1,12],
    [980,520,1015,535,1,18],[1018,525,1060,545,1,30],[908,573,930,580,1,24],[932,577,962,590,1,20],[965,600,1006,615,1,24],[990,630,1004,636,1,9],
    [878,655,906,665,1,20],[936,660,968,672,1,26],[928,685,972,703,2,22],[985,690,1022,706,1,46],[872,730,912,748,2,44],[916,745,936,756,1,54],[952,750,990,765,1,28],[945,775,980,790,1,22],
    [1123,598,1175,610,2,22],[1216,630,1240,640,1,22],[1078,637,1230,692,7,22],[1066,660,1200,710,6,20],[1072,715,1110,730,1,30],[1046,730,1185,785,7,18],[1120,735,1200,770,4,18],
    [1030,785,1050,792,1,24],[1055,795,1165,835,5,20],[1028,822,1050,832,1,16],[1078,845,1150,872,4,24],
    [826,824,850,832,1,15],[860,835,880,840,1,14],[905,830,930,840,1,14],[940,840,1110,905,8,22],[885,850,910,855,1,16],[970,890,1105,938,7,18],
    [893,905,1000,945,6,32],[1010,957,1095,990,5,26],[935,960,1070,1008,7,18],
    [1088,1224,1106,1224,1,28],[1076,1256,1096,1258,1,14],[1068,1280,1086,1282,1,14],[1064,1302,1080,1303,1,12],[1062,1320,1082,1321,1,12],[1064,1345,1080,1346,1,12],[1052,1368,1092,1370,1,28],[1062,1397,1088,1399,1,26],[1040,1440,1060,1430,1,16],[1062,1432,1084,1422,1,16]] },
  { at: [1000, 480], k: [.33333, .33333], rows: [
    [392,78,416,88,1,16],[345,145,392,165,1,26],[202,155,234,166,1,20],[197,195,220,198,1,16],[226,184,242,190,1,14],[275,213,305,213,1,16],[277,234,308,243,1,20],[242,248,262,253,1,18],[455,128,488,128,1,26],[422,147,452,160,1,24],
    [430,270,462,285,1,34],[405,305,425,312,1,30],[500,255,540,265,1,30],[568,48,620,44,2,16],[660,50,705,62,1,28],[645,75,750,122,1,48],[722,65,765,82,1,18],[756,48,780,58,1,18],[740,135,820,148,3,18],[772,102,804,112,1,22],[612,148,680,165,3,26],[714,170,745,190,1,34],[730,215,750,245,1,18],
    [580,185,655,208,4,18],[585,215,660,242,5,18],[676,225,700,232,1,14],[690,255,722,268,2,14],[545,255,730,312,9,22],[495,278,550,292,3,18],[565,290,605,302,3,16],[625,308,700,332,4,20],
    [490,315,545,332,1,22],[550,340,620,365,2,32],[480,340,540,355,2,26],[622,365,710,395,6,24],[450,365,475,372,1,18],[445,395,485,408,3,28],[490,410,525,422,1,26],[540,420,570,430,1,20],[575,410,625,426,2,8],[632,428,668,440,1,10],[570,430,605,440,1,6],
    [425,435,455,442,1,12],[420,462,450,470,1,18],[455,465,660,515,8,22],[500,458,580,478,4,14],[652,465,672,470,1,14],[705,315,745,322,1,30],
    [748,330,785,338,1,24],[740,355,775,362,1,18],[735,385,768,390,1,24],[728,412,752,414,1,34],[712,455,740,460,1,28],[702,480,735,488,2,22],[698,505,728,512,2,24],[685,540,710,545,1,22],[675,566,708,574,1,26],
    [415,530,525,560,1,34],[550,565,598,575,1,40],[488,585,520,595,1,14],[522,595,552,605,3,30],[550,608,575,614,1,30],[596,597,622,600,1,22],[638,597,660,600,1,22],[612,570,642,578,1,18],[572,635,635,660,1,34],
    [80,522,120,540,1,20],[115,530,165,545,1,32],
    [815,45,850,50,1,16],[866,82,895,88,1,16],[920,75,955,85,1,22],[955,115,990,122,1,50],[980,150,1005,152,1,34],[835,150,932,166,3,22],[1008,45,1075,50,3,18],[1085,135,1125,140,1,30],[1115,115,1140,118,1,22],[1028,185,1070,195,1,36],[1075,205,1112,208,1,36],[1005,205,1060,218,1,10],[1070,232,1112,240,1,10],[1030,272,1050,276,1,16],[1048,283,1074,286,1,34]] },
  { at: [1340, 480], k: [.33333, .33333], rows: [
    [130,42,200,62,1,20],[118,66,186,86,1,20],[95,82,140,94,1,16],[205,72,228,78,1,48],[283,115,320,115,1,36],[425,80,473,98,1,28],[380,55,412,65,1,26],[98,122,130,126,1,26],[60,135,95,142,1,28],[100,150,125,155,1,28],[150,140,195,152,1,20],[162,172,210,185,2,28],[165,235,205,242,1,34],[240,202,272,212,1,18],[222,250,262,258,1,28],[275,258,300,265,1,24],[302,272,322,278,1,16],[260,280,332,300,4,16],
    [342,304,358,306,1,20],[376,315,396,318,1,30],[400,322,422,330,1,50],[256,338,280,343,1,28],[282,352,302,356,1,42],[308,358,326,362,1,36],[340,366,360,368,1,34],[365,379,380,380,1,18],[152,312,185,318,1,28],[150,345,172,348,1,16],[133,380,158,386,1,58],
    [602,155,648,172,1,26],[675,172,722,190,1,26],[808,255,830,260,1,30],[803,280,825,285,1,24],[893,236,918,242,1,16],[870,283,892,288,1,42],[836,318,855,323,1,34],[855,328,878,334,1,32],[820,360,842,365,1,26],[812,388,840,396,1,22],[885,408,912,412,1,38],[908,412,930,416,1,30],[722,366,762,380,1,20],[668,406,690,410,1,24],[725,412,758,420,1,36],[675,438,702,445,1,20],[660,466,690,472,1,12],[698,466,722,470,1,30],[738,462,762,465,1,28],[650,486,684,494,1,22],[815,447,838,452,1,34],[806,485,832,492,1,32],[795,516,812,520,1,18],[725,500,748,506,1,26],[862,494,885,498,1,36],[630,488,648,490,1,30],
    [625,290,662,298,1,28],[622,332,648,338,1,16],[600,362,632,370,2,24],[580,412,622,422,2,32],[525,382,562,386,1,14],[527,443,550,444,1,22],[527,487,548,488,1,18],
    [1046,352,1070,360,1,16],[1064,378,1080,382,1,18],[1010,465,1032,470,1,16],[1025,495,1045,500,1,30],[993,524,1034,536,1,20],
    [283,560,310,560,1,22],[257,596,283,596,1,24],[285,595,320,595,1,24],[250,627,274,627,1,20],[403,560,436,560,1,22],[405,594,428,594,1,14],[403,616,430,616,1,16],[457,612,488,618,1,30],[433,695,477,705,1,28],[443,732,482,740,1,16],[428,755,455,762,1,22],[1078,735,1108,742,1,28],[1075,772,1092,774,1,22],
    [515,680,556,684,1,26],[585,716,606,718,1,18]] },
  { at: [1280, 710], k: [.33333, .33333], rows: [
    [475,115,474,253,6,30],[543,122,542,176,3,28],[243,276,278,276,1,16],[337,274,371,276,1,22],[164,314,203,314,1,26],[410,313,434,313,1,64],[473,298,532,318,1,26],[556,294,568,294,1,34],[580,298,596,298,1,38],[157,368,200,368,1,28],[228,375,262,376,1,30],[312,380,338,380,1,44],[382,382,400,382,1,46],[405,368,428,369,1,26],[402,399,470,403,1,14],[462,375,475,375,1,50],[580,379,610,378,1,54],[563,448,602,448,1,48],
    [140,428,168,432,1,24],[140,465,160,468,1,38],[205,437,229,438,1,32],[332,457,354,459,1,36],[328,512,350,516,1,34],[443,478,475,482,1,24],[438,510,468,514,1,22],[430,540,465,544,1,20],[420,568,455,572,1,20],[415,597,452,600,1,20],[410,628,448,632,1,22],[402,660,440,664,1,22],[380,570,410,574,1,34],[370,607,405,611,1,26],[365,652,402,656,1,26],[360,686,392,690,1,16],
    [172,550,345,582,8,30],[168,585,240,596,6,30],[270,608,294,612,1,26],[307,612,332,616,1,26],[165,652,320,680,8,28],[502,556,566,564,1,50],[500,642,564,650,1,48],[575,690,622,700,1,36],[620,700,665,715,1,20],
    [137,505,152,510,1,26],[115,545,145,552,1,30],[95,590,115,595,1,34],[85,625,120,632,1,38],[75,672,115,682,1,36],[130,565,155,570,1,18],
    [610,8,655,18,1,26],[622,38,664,48,1,18],[608,62,665,78,2,20],[688,176,720,188,1,18],[655,190,680,200,1,14],[708,205,735,218,1,16],[632,240,676,256,1,18],[680,250,722,262,2,28],[620,298,716,322,1,12],[605,270,618,272,1,30],[766,232,804,242,1,24],[764,310,830,336,1,28],[745,290,760,292,1,36],
    [943,259,963,260,1,40],[985,264,1008,266,1,40],[1015,278,1032,280,1,28],[1040,276,1062,284,2,42],[1065,290,1108,300,3,30],[1128,308,1214,316,5,32],[1208,150,1262,165,2,34],[1260,48,1288,56,1,28],[1255,88,1272,92,1,22],[1270,270,1300,270,1,14],
    [725,420,750,428,1,28],[750,455,790,462,1,52],[722,478,742,480,1,56],[710,540,732,542,1,34],[704,585,720,587,1,44],[942,348,972,350,1,32],[940,378,968,380,1,24],[930,424,960,428,1,60],[918,472,945,476,1,30],[885,486,915,490,1,24],[893,440,910,442,1,20],[870,568,898,572,1,26],[906,578,935,582,1,26],[860,618,886,620,1,24],
    [1052,350,1020,500,6,28],[1088,358,1062,508,6,26],[1005,555,975,725,7,28],[1048,565,1020,740,7,28],[910,610,895,690,4,28],[1148,375,1182,380,1,26],[1190,382,1230,386,1,30],[1258,380,1276,380,1,16],[1132,410,1156,414,1,20],[1162,413,1182,416,1,26],[1206,424,1226,428,1,22],[1240,418,1266,424,1,20],[1250,440,1286,448,2,18],
    [1122,478,1280,500,8,20],[1118,515,1275,548,8,26],[1210,530,1232,534,1,40],[1102,578,1130,588,2,26],[1140,590,1170,596,2,22],[1178,602,1262,618,4,24],[1090,630,1116,634,1,22],[1120,625,1140,628,1,16],[1165,634,1185,638,1,30],[1190,640,1240,652,2,18],[1085,688,1150,700,4,28],[680,650,750,664,1,18],
    [765,28,785,30,1,16],[832,108,860,116,1,18],[865,130,890,135,1,14],[895,82,935,92,3,20],[955,105,1030,125,4,20],[960,145,1050,170,5,22],[1045,132,1085,140,3,26],[985,180,1030,192,3,20],[1115,170,1130,172,1,66],[1092,222,1110,226,1,24],[765,92,805,104,1,72]] }
];

const svgNs = "http://www.w3.org/2000/svg";
const layer = document.getElementById("buildings");
for (const { at, k, rows } of blocks) {
  let d = "";
  for (const [x1, y1, x2, y2, n, depth] of rows) {
    const len = Math.hypot(x2 - x1, y2 - y1);
    const ux = (x2 - x1) / len, uy = (y2 - y1) / len;
    const px = -uy * depth / 2, py = ux * depth / 2;
    const step = len / n;
    for (let i = 0; i < n; i++) {
      const a = i * step, b = a + step - (n > 1 ? 3 : 0);
      const p = (t, s) => (x1 + ux * t + px * s).toFixed(1) + " " + (y1 + uy * t + py * s).toFixed(1);
      d += "M" + p(a, -1) + "L" + p(b, -1) + "L" + p(b, 1) + "L" + p(a, 1) + "z";
    }
  }
  const path = document.createElementNS(svgNs, "path");
  path.setAttribute("transform", `translate(${at}) scale(${k})`);
  path.setAttribute("d", d);
  layer.append(path);
}
```
